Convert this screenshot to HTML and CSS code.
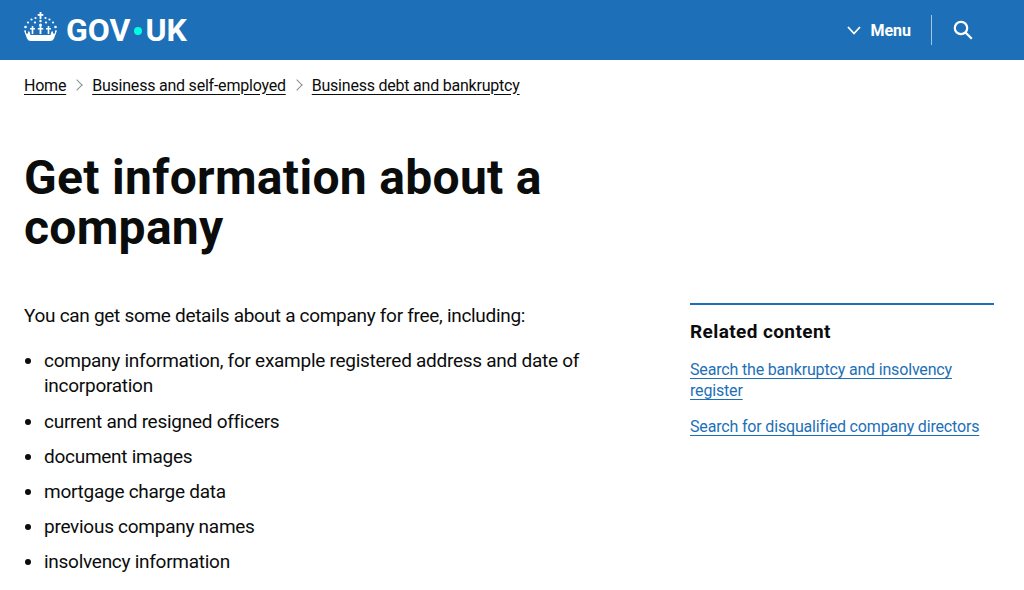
FILE: index.html
```html
<!DOCTYPE html>
<html lang="en">
<head>
<meta charset="utf-8">
<title>Get information about a company</title>
<link rel="stylesheet" href="styles.css">
</head>
<body>
<header class="topbar">
  <a class="logo" href="#">
    <svg class="crown" width="33" height="30" viewBox="0 0 33 30" fill="#fff" aria-hidden="true">
      <rect x="15.6" y="0" width="1.8" height="7"/><rect x="13.7" y="2" width="5.6" height="1.8"/>
      <circle cx="16.5" cy="9" r="1.200"/><circle cx="11.500" cy="6" r="1.100"/><circle cx="21.500" cy="6" r="1.100"/>
      <circle cx="7.500" cy="7.500" r="1.100"/><circle cx="25.500" cy="7.500" r="1.100"/><circle cx="4" cy="10.500" r="1.100"/><circle cx="29" cy="10.500" r="1.100"/>
      <circle cx="11" cy="10.500" r="1.100"/><circle cx="22" cy="10.500" r="1.100"/><circle cx="16.500" cy="13" r="1.500"/>
      <circle cx="1.500" cy="15" r="1.300"/><circle cx="31.500" cy="15" r="1.300"/>
      <rect x="15.600" y="14" width="1.800" height="8"/><rect x="13.800" y="16" width="5.400" height="1.500"/>
      <rect x="7.700" y="14" width="1.600" height="8"/><rect x="6" y="16" width="5" height="1.500"/>
      <rect x="23.700" y="14" width="1.600" height="8"/><rect x="22" y="16" width="5" height="1.500"/>
      <path d="M0 18.500h2v3h2v-2h1.500l1 3.500h20l1-3.500H29v2h2v-3h2l-3 8q-1 2.500-4 2.500H7q-3 0-4-2.500z"/>
    </svg>
    <span class="wordmark">GOV<span class="dot"></span>UK</span>
  </a>
  <nav class="topnav">
    <span class="menu">
      <svg width="14" height="9" viewBox="0 0 14 9" fill="none" stroke="#fff" stroke-width="1.800" aria-hidden="true"><path d="M1 1l6 6.500L13 1"/></svg>
      Menu
    </span>
    <span class="divider"></span>
    <span class="search">
      <svg width="20" height="20" viewBox="0 0 20 20" fill="none" stroke="#fff" stroke-width="2.200" aria-hidden="true"><circle cx="8" cy="8" r="6.200"/><path d="M12.500 12.500l6.300 6.300"/></svg>
    </span>
  </nav>
</header>
<nav class="crumbs">
  <a href="#">Home</a>
  <span class="chev"></span>
  <a href="#">Business and self-employed</a>
  <span class="chev"></span>
  <a href="#">Business debt and bankruptcy</a>
</nav>
<h1 class="title">Get information about a company</h1>
<div class="columns">
  <main class="content">
    <p class="lead">You can get some details about a company for free, including:</p>
    <ul class="list">
      <li>company information, for example registered address and date of incorporation</li>
      <li>current and resigned officers</li>
      <li>document images</li>
      <li>mortgage charge data</li>
      <li>previous company names</li>
      <li>insolvency information</li>
    </ul>
  </main>
  <aside class="related">
    <h2 class="related-title">Related content</h2>
    <ul class="related-list">
      <li><a href="#">Search the bankruptcy and insolvency register</a></li>
      <li><a href="#">Search for disqualified company directors</a></li>
    </ul>
  </aside>
</div>
</body>
</html>
```
FILE: styles.css
```css
* { box-sizing: border-box; }
html, body { margin: 0; padding: 0; }
body { width: 1024px; height: 590px; overflow: hidden; background: #fff; color: #0b0c0c; font-family: Roboto, Arial, sans-serif; }
a { color: inherit; }
.topbar { height: 60px; background: #1d70b8; display: flex; align-items: center; justify-content: space-between; padding: 0 51px 0 24px; color: #fff; }
.logo { display: flex; align-items: center; gap: 9px; text-decoration: none; color: #fff; }
.crown { display: block; margin-bottom: 6px; }
.wordmark { font-size: 32px; font-weight: 700; line-height: 30px; display: flex; align-items: center; }
.dot { width: 8px; height: 8px; border-radius: 50%; background: #00ffe0; margin: 2px 3.500px 0; }
.topnav { display: flex; align-items: center; }
.menu { display: flex; align-items: center; gap: 9px; font-size: 16px; font-weight: 700; }
.divider { width: 1px; height: 30px; background: rgba(255,255,255,.6); margin: 0 21px 0 20px; }
.search { display: block; height: 20px; }
.crumbs { display: flex; align-items: center; padding: 0 24px; height: 50px; font-size: 16px; letter-spacing: -0.22px; }
.crumbs a { text-underline-offset: 3px; }
.chev { width: 8px; height: 8px; border-top: 1px solid #8a8d8e; border-right: 1px solid #8a8d8e; transform: rotate(45deg); margin: 0 11px 0 7px; flex: none; }
.title { margin: 0; padding: 43px 0 0 24px; width: 600px; font-size: 48px; line-height: 50px; font-weight: 700; letter-spacing: 0.3px; }
.columns { display: flex; padding: 0 30px 0 24px; margin-top: 50px; }
.content { width: 666px; font-size: 19px; line-height: 25.200px; letter-spacing: -0.3px; }
.lead { margin: 0 0 20px; width: 600px; }
.list { margin: 0; padding: 0 0 0 20px; width: 576px; letter-spacing: -0.27px; }
.list li { margin-bottom: 10px; }
.related { width: 304px; margin-top: 0; border-top: 2px solid #1d70b8; padding-top: 14px; }
.related-title { margin: 0 0 15px; font-size: 19px; line-height: 25px; font-weight: 700; letter-spacing: 0.4px; }
.related-list { list-style: none; margin: 0; padding: 0; font-size: 16px; line-height: 21px; color: #1d70b8; letter-spacing: -0.17px; }
.related-list li { margin-bottom: 15px; }
.related-list a { text-underline-offset: 3px; }
```
